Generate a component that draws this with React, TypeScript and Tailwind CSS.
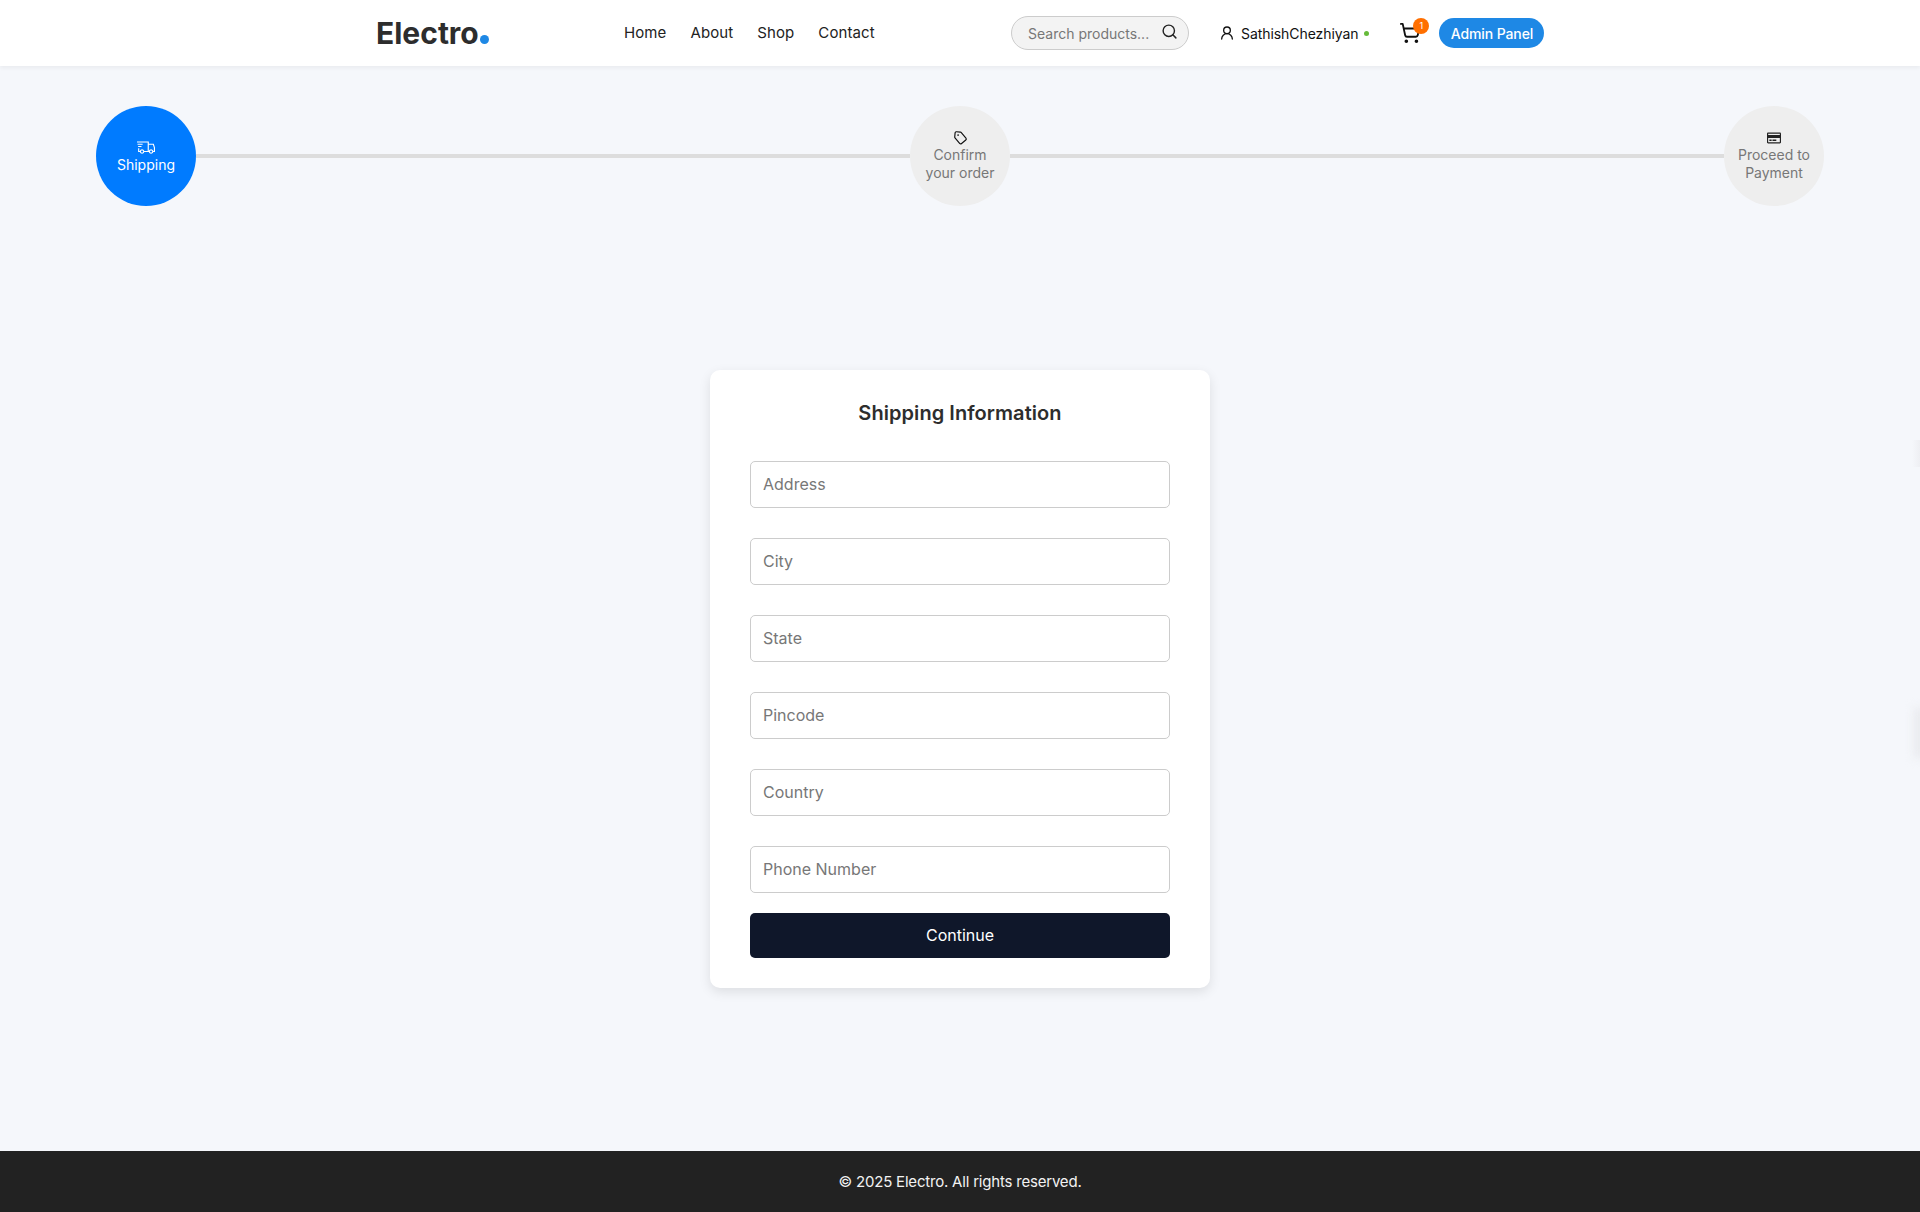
import { LuSearch, LuShoppingCart, LuTag, LuUserRound } from "react-icons/lu";
import { LiaShippingFastSolid } from "react-icons/lia";
import { FaRegCreditCard } from "react-icons/fa";

const fields = ["Address", "City", "State", "Pincode", "Country", "Phone Number"];

const Header = () => (
  <header className="h-[66px] bg-white shadow-[0_2px_4px_rgba(0,0,0,0.05)] flex items-center pl-[376px] relative z-10">
    <div className="w-[248px] flex items-baseline text-[30px] font-bold text-[#2d2d2d] leading-none">
      Electro<span className="w-[9px] h-[9px] ml-[1px] rounded-full bg-[#1e88e5] inline-block" />
    </div>
    <nav className="flex gap-6 w-[387px] text-[15px] text-[#222] tracking-[0.1px] font-normal">
      <a>Home</a>
      <a>About</a>
      <a>Shop</a>
      <a>Contact</a>
    </nav>
    <div className="w-[178px] h-[34px] rounded-[17px] border border-[#ccc] bg-[#f3f3f3] flex items-center pl-4 pr-[10px] justify-between text-[14px] text-[#777]">
      <span>Search products...</span>
      <LuSearch className="w-[17px] h-[17px] text-[#222] -mt-[3px]" />
    </div>
    <div className="ml-[30px] flex items-center text-[14px] tracking-[-0.07px] text-[#111]">
      <LuUserRound className="w-[16px] h-[16px] mr-[6px]" />
      <span>SathishChezhiyan</span>
      <span className="w-[5px] h-[5px] ml-[6px] rounded-full bg-[#66bb3a]" />
    </div>
    <div className="relative ml-[30px] w-[22px] h-[22px]">
      <LuShoppingCart className="w-[22px] h-[22px] text-[#111]" />
      <span className="absolute -top-[4px] left-[14px] w-[16px] h-[16px] rounded-full bg-[#ff6f00] text-white text-[9px] flex items-center justify-center">1</span>
    </div>
    <div className="ml-[18px] w-[105px] h-[30px] rounded-[15px] bg-[#1e88e5] text-white text-[14px] tracking-[-0.1px] font-medium flex items-center justify-center">
      Admin Panel
    </div>
  </header>
);

const Step = ({ active, lines, icon }: { active?: boolean; lines: string[]; icon: React.ReactNode }) => (
  <div
    className={`w-[100px] h-[100px] rounded-full shrink-0 flex flex-col items-center justify-center text-[14px] leading-[18px] text-center ${
      active ? "bg-[#007bff] text-white" : "bg-[#eeeeee] text-[#777]"
    }`}
  >
    {icon}
    {lines.map((l) => (
      <span key={l}>{l}</span>
    ))}
  </div>
);

const Line = () => <div className="flex-1 h-1 bg-[#dddddd]" />;

export default function App() {
  return (
    <div className="min-h-[1212px] flex flex-col bg-[#f5f7fb] font-['Inter','Noto_Sans',sans-serif]">
      <Header />
      <main className="flex-1 relative overflow-hidden">
        <div className="flex items-center px-[96px] pt-10">
          <Step active lines={["Shipping"]} icon={<LiaShippingFastSolid className="w-[18px] h-[18px] text-white" />} />
          <Line />
          <Step lines={["Confirm", "your order"]} icon={<LuTag className="w-[15px] h-[14px] mb-[2px] text-[#111] translate-y-[1px] rotate-[5deg]" />} />
          <Line />
          <Step lines={["Proceed to", "Payment"]} icon={<FaRegCreditCard className="w-[14px] h-[14px] mb-[2px] text-[#222] translate-y-[1px]" />} />
        </div>
        <div className="mt-[164px] mx-auto w-[500px] bg-white rounded-[10px] shadow-[0_4px_12px_rgba(0,0,0,0.1)] px-10 pt-[30px] pb-[30px]">
          <h2 className="text-[20px] font-semibold text-[#2d2d2d] text-center tracking-[0.06px] leading-[26px] mb-[35px]">Shipping Information</h2>
          <div className="flex flex-col gap-[30px]">
            {fields.map((f) => (
              <input
                key={f}
                placeholder={f}
                className="w-full h-[47px] px-3 pb-[2px] rounded-[5px] border border-[#ccc] bg-white text-[16px] placeholder:text-[#777] outline-none"
              />
            ))}
          </div>
          <button className="w-full h-[45px] mt-5 pb-[2px] rounded-[5px] bg-[#0f172a] text-white text-[16px]">Continue</button>
        </div>
        <div className="absolute right-0 top-[374px] w-[8px] h-[27px] bg-gradient-to-r from-transparent to-[#eeeff3]" />
        <div className="absolute -right-[6px] top-[642px] w-[12px] h-[50px] bg-[#e9eaee] blur-[5px]" />
      </main>
      <footer className="h-[61px] pt-[2px] bg-[#222222] text-[#f2f2f2] text-[15px] tracking-[-0.2px] flex items-center justify-center">
        © 2025 Electro. All rights reserved.
      </footer>
    </div>
  );
}
